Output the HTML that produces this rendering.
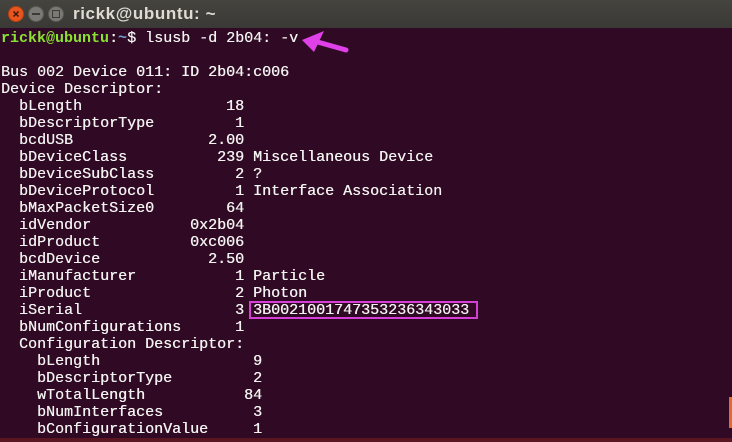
<!DOCTYPE html>
<html><head><style>
html,body{margin:0;padding:0;}
body{width:732px;height:442px;overflow:hidden;background:#300a24;position:relative;font-family:"Liberation Mono",monospace;}
#tb{position:absolute;left:0;top:0;width:732px;height:28px;background:linear-gradient(#45443f,#3a3935);}
.btn{position:absolute;top:6px;width:16px;height:16px;border-radius:50%;box-sizing:border-box;}
#title{position:absolute;left:73px;top:4px;color:#dfdbd2;font:bold 17px "Liberation Sans",sans-serif;letter-spacing:0.6px;}
pre{position:absolute;left:1px;top:30px;margin:0;font-size:15px;line-height:17px;color:#f2f2f0;font-family:"Liberation Mono",monospace;text-shadow:0.3px 0 0 #f2f2f0;}
.g{color:#8ae234;font-weight:bold;text-shadow:none}.b{color:#729fcf;font-weight:bold;text-shadow:none}
#box{position:absolute;left:249px;top:301px;width:229px;height:18px;border:2px solid #d63fd6;box-sizing:border-box;}
#bot{position:absolute;left:0;top:438px;width:732px;height:4px;background:#5a1620;}
#sb{position:absolute;left:729px;top:397px;width:3px;height:31px;background:#e06a2f;}
</style></head><body>
<div id="tb">
<div class="btn" style="left:8px;background:#e9541f;border:1px solid #b8420f"><svg width="14" height="14" style="position:absolute;left:0;top:0"><path d="M4.5 4.5L9.5 9.5M9.5 4.5L4.5 9.5" stroke="#3a1a0a" stroke-width="1.5"/></svg></div>
<div class="btn" style="left:28px;background:#7a7974;border:1px solid #5a5954"><div style="position:absolute;left:3px;top:6px;width:8px;height:2px;background:#3c3b37"></div></div>
<div class="btn" style="left:48px;background:#7a7974;border:1px solid #5a5954"><div style="position:absolute;left:3px;top:3px;width:6px;height:6px;border:1px solid #3c3b37"></div></div>
<div id="title">rickk@ubuntu: ~</div>
</div>
<pre><span class="g">rickk@ubuntu</span>:<span class="b">~</span>$ lsusb -d 2b04: -v

Bus 002 Device 011: ID 2b04:c006
Device Descriptor:
  bLength                18
  bDescriptorType         1
  bcdUSB               2.00
  bDeviceClass          239 Miscellaneous Device
  bDeviceSubClass         2 ?
  bDeviceProtocol         1 Interface Association
  bMaxPacketSize0        64
  idVendor           0x2b04
  idProduct          0xc006
  bcdDevice            2.50
  iManufacturer           1 Particle
  iProduct                2 Photon
  iSerial                 3 3B0021001747353236343033
  bNumConfigurations      1
  Configuration Descriptor:
    bLength                 9
    bDescriptorType         2
    wTotalLength           84
    bNumInterfaces          3
    bConfigurationValue     1</pre>
<div id="box"></div>
<svg style="position:absolute;left:0;top:0" width="732" height="442"><path d="M346 50L314 41" stroke="#e040e8" stroke-width="5" stroke-linecap="round"/><path d="M302 40L324 31L314 52Z" fill="#e040e8"/></svg>
<div id="sb"></div>
<div id="bot"></div>
</body></html>
